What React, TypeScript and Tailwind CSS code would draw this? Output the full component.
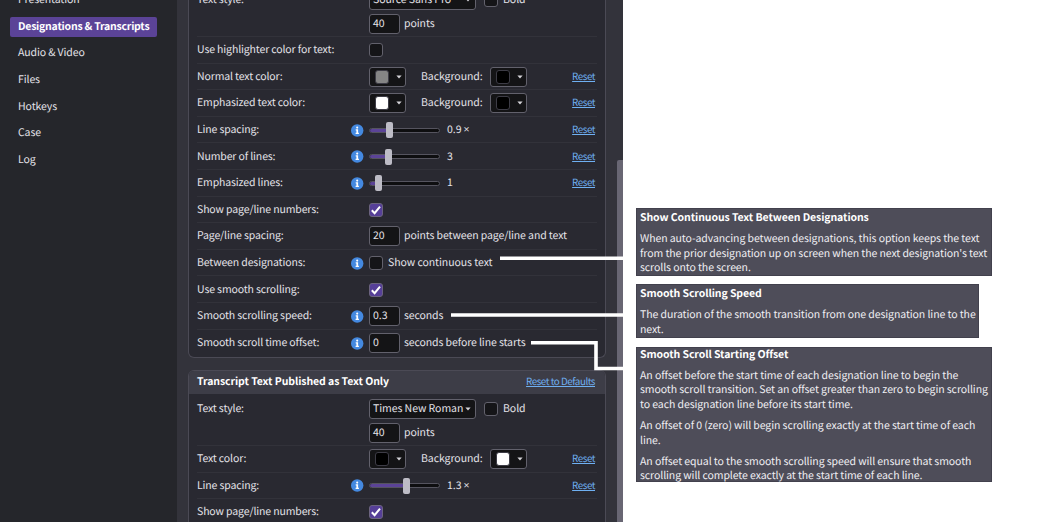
import type { ReactNode } from "react";

function Label({ children }: { children: ReactNode }) {
  return <div className="w-[154px] shrink-0 tracking-[-0.13px]">{children}</div>;
}

function InfoIcon() {
  return (
    <svg className="-ml-[0.5px] h-[13px] w-[13px]" viewBox="0 0 13 13">
      <circle cx="6.2" cy="6.5" r="6.2" fill="#4489e0" />
      <circle cx="6.2" cy="3.6" r="1.05" fill="#fff" />
      <path d="M4.7 5.3h2.4v3.5h.8v1.2H4.6V8.8h.8V6.5h-.7z" fill="#fff" />
    </svg>
  );
}

function Check({ on = false }: { on?: boolean }) {
  return (
    <div
      className={
        "flex h-[14px] w-[14px] shrink-0 items-center justify-center rounded-[3px] border " +
        (on ? "border-[#6c6480] bg-[#563f98]" : "border-[#62616c] bg-[#151518]")
      }
    >
      {on && (
        <svg className="h-[12px] w-[12px] shrink-0" viewBox="0 0 12 12" fill="none">
          <path d="M1.8 6.3 4.6 9.2 10 2.6" stroke="#fff" strokeWidth="2" />
        </svg>
      )}
    </div>
  );
}

function Field({ value }: { value: string }) {
  return (
    <div className="flex h-5 w-[31px] shrink-0 items-center rounded-[3px] border border-[#62616c] bg-[#141416] pl-[3px]">
      {value}
    </div>
  );
}

function Caret() {
  return (
    <svg className="h-[4px] w-[6px] shrink-0" viewBox="0 0 6 4">
      <path d="M.4.4h5.2L3 3.6z" fill="#d6d5da" />
    </svg>
  );
}

function Select({ value }: { value: string }) {
  return (
    <div className="flex h-5 w-[107px] shrink-0 items-center justify-between rounded-[3px] border border-[#62616c] bg-[#141416] pr-1 pl-[3px]">
      <span>{value}</span>
      <Caret />
    </div>
  );
}

type Swatch = "gray" | "white" | "black";
const swatches: Record<Swatch, string> = {
  gray: "bg-[#858585]",
  white: "bg-white",
  black: "bg-black",
};

function ColorPicker({ color }: { color: Swatch }) {
  return (
    <div className="flex h-5 w-[37px] shrink-0 items-center justify-between rounded-[3px] border border-[#62616c] bg-[#141416] pr-[3px] pl-[5px]">
      <span className={"h-[14px] w-[14px] rounded-[3px] border border-[#3d3c46] " + swatches[color]} />
      <Caret />
    </div>
  );
}

function Slider({ position }: { position: number }) {
  return (
    <div className="relative flex h-4 w-[71px] shrink-0 items-center">
      <div className="h-[5px] w-full overflow-hidden rounded-full border border-[#55545f] bg-[#0e0e10]">
        <div className="h-full bg-[#5b4397]" style={{ width: position }} />
      </div>
      <div className="absolute top-0 h-4 w-[7px] rounded-[2px] bg-[#bdbcc6]" style={{ left: position - 3.5 }} />
    </div>
  );
}

function Reset() {
  return <a className="mr-[2px] ml-auto pb-[2px] text-[9.8px] tracking-[-0.45px] text-[#6fb0f2] underline">Reset</a>;
}

function Row({
  label,
  info = false,
  reset = false,
  last = false,
  children,
}: {
  label: string;
  info?: boolean;
  reset?: boolean;
  last?: boolean;
  children: ReactNode;
}) {
  return (
    <div className={"flex h-[26.6px] items-center pt-[1px] " + (last ? "" : "border-b border-[#32323a]")}>
      <Label>{label}</Label>
      <div className="w-[18px] shrink-0">{info && <InfoIcon />}</div>
      {children}
      {reset && <Reset />}
    </div>
  );
}

function TextStyle({ font }: { font: string }) {
  return (
    <div className="flex h-[52px] border-b border-[#32323a] pt-[5px]">
      <div className="w-[172px] shrink-0 leading-5 tracking-[-0.13px]">Text style:</div>
      <div className="flex flex-col gap-[3.5px]">
        <div className="flex items-center">
          <Select value={font} />
          <div className="ml-2 flex items-center gap-[5px]">
            <Check />
            <span>Bold</span>
          </div>
        </div>
        <div className="flex items-center gap-1">
          <Field value="40" />
          <span>points</span>
        </div>
      </div>
    </div>
  );
}

function Colors({ text, background }: { text: Swatch; background: Swatch }) {
  return (
    <>
      <ColorPicker color={text} />
      <span className="ml-[15px] w-[69px] shrink-0">Background:</span>
      <ColorPicker color={background} />
    </>
  );
}

function SliderValue({ position, value, times = false }: { position: number; value: string; times?: boolean }) {
  return (
    <>
      <Slider position={position} />
      <span className="ml-[7px]">{value}</span>
      {times && <span className="ml-[2px] font-['Open_Sans',sans-serif]">×</span>}
    </>
  );
}

const navItems = ["Presentation", "Designations & Transcripts", "Audio & Video", "Files", "Hotkeys", "Case", "Log"];

function Sidebar() {
  return (
    <nav className="-mt-[13px] flex w-[177px] shrink-0 flex-col pl-[10px]">
      {navItems.map((item, i) => (
        <div key={item} className="flex h-[26.6px] items-center">
          <div
            className={
              "flex h-5 items-center px-2 " +
              (i === 1
                ? "w-[147px] rounded-[2px] bg-[#5b4397] font-bold tracking-[-0.23px] text-white"
                : "tracking-[-0.09px]")
            }
          >
            {item}
          </div>
        </div>
      ))}
    </nav>
  );
}

function Note({ title, paragraphs, className }: { title: string; paragraphs: string[][]; className: string }) {
  return (
    <section className={"flex flex-col gap-[7px] border border-[#42414d] bg-[#4e4d59] pl-[3px] leading-[14.4px] tracking-[-0.085px] text-[#f0eff3] " + className}>
      <h2 className="font-bold text-white">{title}</h2>
      {paragraphs.map((lines) => (
        <p key={lines[0]}>
          {lines.map((line) => (
            <span key={line} className="block">
              {line}
            </span>
          ))}
        </p>
      ))}
    </section>
  );
}

export default function App() {
  return (
    <div className="relative flex h-[522px] w-[1044px] overflow-hidden bg-white font-['Noto_Sans_CJK_SC',sans-serif] text-[10.5px] leading-4 tracking-[-0.06px] whitespace-nowrap text-[#e4e3e9] [text-rendering:geometricPrecision]">
      <div className="flex h-full w-[623px] shrink-0 overflow-hidden bg-[#25262b]">
        <Sidebar />
        <main className="flex h-full w-[446px] shrink-0 justify-between overflow-hidden bg-[#33333b] pl-[11px]">
          <div className="-mt-[15px] flex w-[418px] shrink-0 flex-col gap-[11.5px]">
            <section className="h-[373px] shrink-0 rounded-b-[6px] border border-t-0 border-[#4b4a55] bg-[#292931] px-2">
              <TextStyle font="Source Sans Pro" />
              <Row label="Use highlighter color for text:"><Check /></Row>
              <Row label="Normal text color:" reset><Colors text="gray" background="black" /></Row>
              <Row label="Emphasized text color:" reset><Colors text="white" background="black" /></Row>
              <Row label="Line spacing:" info reset><SliderValue position={20} value="0.9" times /></Row>
              <Row label="Number of lines:" info reset><SliderValue position={19} value="3" /></Row>
              <Row label="Emphasized lines:" info reset><SliderValue position={9.5} value="1" /></Row>
              <Row label="Show page/line numbers:"><Check on /></Row>
              <Row label="Page/line spacing:">
                <Field value="20" />
                <span className="ml-1 tracking-[-0.1px]">points between page/line and text</span>
              </Row>
              <Row label="Between designations:" info>
                <Check />
                <span className="ml-[5px]">Show continuous text</span>
              </Row>
              <Row label="Use smooth scrolling:"><Check on /></Row>
              <Row label="Smooth scrolling speed:" info>
                <Field value="0.3" />
                <span className="ml-1 tracking-[-0.1px]">seconds</span>
              </Row>
              <Row label="Smooth scroll time offset:" info last>
                <Field value="0" />
                <span className="ml-1 tracking-[-0.1px]">seconds before line starts</span>
              </Row>
            </section>
            <section className="h-[180px] shrink-0 overflow-hidden rounded-t-[6px] border border-[#4b4a55] bg-[#292931]">
              <header className="flex h-[23.5px] items-center justify-between bg-[#3d3d47] pr-[10px] pl-2">
                <h2 className="font-bold tracking-[-0.08px] text-white">Transcript Text Published as Text Only</h2>
                <a className="pb-[2px] text-[9.8px] tracking-[-0.45px] text-[#6fb0f2] underline">Reset to Defaults</a>
              </header>
              <div className="px-2">
                <TextStyle font="Times New Roman" />
                <Row label="Text color:" reset><Colors text="black" background="white" /></Row>
                <Row label="Line spacing:" info reset><SliderValue position={37} value="1.3" times /></Row>
                <Row label="Show page/line numbers:"><Check on /></Row>
              </div>
            </section>
          </div>
          <div className="flex w-[6px] flex-col pt-40">
            <div className="flex-1 rounded-tl-[2px] bg-[#686673]" />
          </div>
        </main>
      </div>
      <aside className="flex flex-col items-start pt-[208px] pl-[13px]">
        <Note
          className="h-[68px] w-[356px] pt-[1.8px]"
          title="Show Continuous Text Between Designations"
          paragraphs={[[
            "When auto-advancing between designations, this option keeps the text",
            "from the prior designation up on screen when the next designation's text",
            "scrolls onto the screen.",
          ]]}
        />
        <Note
          className="mt-2 h-[54px] w-[343px] pt-[2px]"
          title="Smooth Scrolling Speed"
          paragraphs={[["The duration of the smooth transition from one designation line to the", "next."]]}
        />
        <Note
          className="mt-[9px] h-[135px] w-[356px] *:relative *:-top-[0.5px]"
          title="Smooth Scroll Starting Offset"
          paragraphs={[
            [
              "An offset before the start time of each designation line to begin the",
              "smooth scroll transition. Set an offset greater than zero to begin scrolling",
              "to each designation line before its start time.",
            ],
            ["An offset of 0 (zero) will begin scrolling exactly at the start time of each", "line."],
            [
              "An offset equal to the smooth scrolling speed will ensure that smooth",
              "scrolling will complete exactly at the start time of each line.",
            ],
          ]}
        />
      </aside>
      <svg className="pointer-events-none absolute inset-0" width="1044" height="522" fill="none" stroke="#fff" strokeWidth="3.6">
        <path d="M500 258.2H624M451 315H624M531 342.7H596V368.5H624" />
      </svg>
    </div>
  );
}
